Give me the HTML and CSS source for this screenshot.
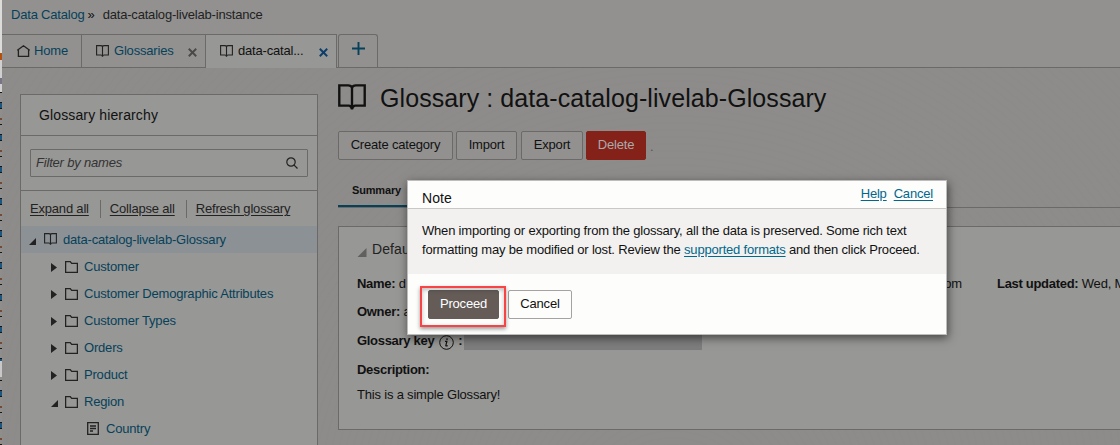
FILE: index.html
```html
<!DOCTYPE html>
<html lang="en">
<head>
<meta charset="utf-8">
<title>Data Catalog</title>
<link rel="stylesheet" href="styles.css">
</head>
<body>
<svg class="defs" aria-hidden="true">
  <symbol id="book" viewBox="0 0 26 24"><path d="M13 3.400Q12.300 1.200 9.500 1.200H1.200V20H10Q12.300 20 13 23.500Q13.700 20 16 20H24.800V1.200H16.500Q13.700 1.200 13 3.400V22" fill="none" stroke="currentColor" stroke-width="2.200"/></symbol>
  <symbol id="folder" viewBox="0 0 13 12"><path d="M.6 11.400V.6H5.200L6.700 2.400H12.400V11.400Z" fill="none" stroke="currentColor" stroke-width="1.300"/></symbol>
  <symbol id="closed" viewBox="0 0 6 9"><path d="M0 0L6 4.500L0 9Z" fill="currentColor"/></symbol>
  <symbol id="open" viewBox="0 0 7 7"><path d="M7 0V7H0Z" fill="currentColor"/></symbol>
  <symbol id="close" viewBox="0 0 8 8"><path d="M.7.7L7.300 7.300M7.300.7L.7 7.300" stroke="currentColor" stroke-width="1.700"/></symbol>
</svg>
<div class="page">
  <div class="edge"></div>
  <div class="app">
    <header class="crumbs"><a class="link">Data Catalog</a><span class="sep">»</span><span>data-catalog-livelab-instance</span></header>
    <nav class="tabs">
      <a class="tab tab-home link"><svg class="home-icon" viewBox="0 0 13 12"><path d="M.7 5L6.500.8L12.300 5L11.600 5.400V11.300H1.400V5.400Z" fill="none" stroke="currentColor" stroke-width="1.300"/></svg><span>Home</span></a>
      <a class="tab tab-gloss link"><svg class="book-icon"><use href="#book"/></svg><span>Glossaries</span><svg class="x"><use href="#close"/></svg></a>
      <a class="tab tab-active"><svg class="book-icon"><use href="#book"/></svg><span>data-catal...</span><svg class="x"><use href="#close"/></svg></a>
      <a class="tab tab-add"><svg class="plus" viewBox="0 0 13 13"><path d="M6.500 0V13M0 6.500H13" stroke="currentColor" stroke-width="1.900"/></svg></a>
    </nav>
    <div class="content">
      <aside class="side">
        <h2 class="side-title"><span>Glossary hierarchy</span></h2>
        <div class="filter"><div class="filter-input"><span>Filter by names</span><svg class="search" viewBox="0 0 12 12"><circle cx="5" cy="5" r="4.200" fill="none" stroke="currentColor" stroke-width="1.200"/><path d="M8.100 8.100L11.500 11.500" stroke="currentColor" stroke-width="1.200"/></svg></div></div>
        <div class="actions"><a class="expand">Expand all</a><a class="collapse">Collapse all</a><a class="refresh">Refresh glossary</a></div>
        <ul class="tree">
          <li class="row root"><svg class="open"><use href="#open"/></svg><svg class="book-icon"><use href="#book"/></svg><span>data-catalog-livelab-Glossary</span></li>
          <li class="row"><svg class="closed"><use href="#closed"/></svg><svg class="folder"><use href="#folder"/></svg><span>Customer</span></li>
          <li class="row"><svg class="closed"><use href="#closed"/></svg><svg class="folder"><use href="#folder"/></svg><span>Customer Demographic Attributes</span></li>
          <li class="row"><svg class="closed"><use href="#closed"/></svg><svg class="folder"><use href="#folder"/></svg><span>Customer Types</span></li>
          <li class="row"><svg class="closed"><use href="#closed"/></svg><svg class="folder"><use href="#folder"/></svg><span>Orders</span></li>
          <li class="row"><svg class="closed"><use href="#closed"/></svg><svg class="folder"><use href="#folder"/></svg><span>Product</span></li>
          <li class="row"><svg class="open"><use href="#open"/></svg><svg class="folder"><use href="#folder"/></svg><span>Region</span></li>
          <li class="row leaf"><svg class="term" viewBox="0 0 12 13"><path d="M.7.7H11.300V12.300H.7ZM3 4H9M3 6.500H9M3 9H6" fill="none" stroke="currentColor" stroke-width="1.300"/></svg><span>Country</span></li>
        </ul>
      </aside>
      <main class="main">
        <div class="heading"><svg class="big-book"><use href="#book"/></svg><h1>Glossary : data-catalog-livelab-Glossary</h1></div>
        <div class="buttons"><button class="btn b-create">Create category</button><button class="btn b-import">Import</button><button class="btn b-export">Export</button><button class="btn b-delete">Delete</button><span class="dot">.</span></div>
        <div class="subtabs"><span class="subtab">Summary</span></div>
        <section class="panel">
          <h3 class="panel-title"><svg class="panel-arrow"><use href="#open"/></svg><span>Defau</span></h3>
          <div class="fields"><p class="name"><b>Name:</b> d</p><p class="mail">com</p><p class="updated"><b>Last updated:</b> Wed, M</p></div>
          <p class="owner"><b>Owner:</b> a</p>
          <div class="key"><b>Glossary key</b><svg class="info" viewBox="0 0 15 15"><circle cx="7.500" cy="7.500" r="6.800" fill="none" stroke="currentColor"/><path d="M6 6.300H7.900L6.800 10.500Q6.700 11.300 8.700 10.600" fill="none" stroke="currentColor" stroke-width="1.200"/><circle cx="8" cy="4.100" r=".9" fill="currentColor"/></svg><b>:</b><span class="redacted"></span></div>
          <p class="desc-label"><b>Description:</b></p>
          <p class="desc">This is a simple Glossary!</p>
        </section>
      </main>
    </div>
  </div>
  <div class="dialog">
    <div class="dialog-head"><span class="note">Note</span><a class="help">Help</a><a class="head-cancel">Cancel</a></div>
    <div class="dialog-body"><p>When importing or exporting from the glossary, all the data is preserved. Some rich text</p><p>formatting may be modified or lost. Review the <a>supported formats</a> and then click Proceed.</p></div>
    <div class="dialog-foot"><button class="btn proceed">Proceed</button><button class="btn cancel">Cancel</button></div>
    <div class="highlight"></div>
  </div>
</div>
</body>
</html>
```
FILE: styles.css
```css
* { box-sizing: border-box; }
body { margin: 0; font: 13px/18px "Liberation Sans", Arial, sans-serif; letter-spacing: -.19px; color: #111; }
h1, h2, h3, p, ul { margin: 0; padding: 0; font-weight: normal; }
b { letter-spacing: -.3px; }
svg { flex: none; display: block; }
.defs { position: absolute; width: 0; height: 0; }
.page { position: relative; width: 1120px; height: 445px; overflow: hidden; display: flex; background: #8d8c8a; }
.edge { width: 2px; flex: none; background:
  linear-gradient(#c8c8c8, #c8c8c8) 0 361px / 2px 16px no-repeat,
  linear-gradient(#dcdcda 0 53px, #b4500e 53px 60px, #d0d0d0 60px 78px, #777488 78px 84px, #d0d0d0 84px 92px) 0 0 / 2px 92px no-repeat,
  repeating-linear-gradient(#8f8e8d 0 6px, #161616 6px 7px, #1c5680 7px 12px, #161616 12px 13px, #8f8e8d 13px 22px, #744c35 22px 24px, #8f8e8d 24px 28px, #161616 28px 29px, #8f8e8d 29px 32px); }
.app { flex: 1; min-width: 0; }
.link { color: #06415a; }
.crumbs { height: 34px; padding: 6px 0 0 9px; background: #929190; color: #222; white-space: nowrap; display: flex; }
.sep { margin: 0 8px 0 3px; color: #111; }
.tabs { height: 34px; display: flex; background: #929190; border-bottom: 1px solid #6c6a68; }
.tab { height: 33px; display: flex; align-items: center; border-top: 1px solid #6c6a68; border-right: 1px solid #6c6a68; white-space: nowrap; }
.tab svg { color: #222; }
.tab-home { width: 80px; padding-left: 15px; gap: 4px; }
.home-icon { width: 13px; height: 12px; }
.book-icon { width: 13px; height: 12px; color: #222; }
.tab-gloss { width: 124px; padding-left: 14px; gap: 5px; }
.tab .x { width: 9px; height: 9px; margin: 2px 8px 0 auto; color: #4b4947; }
.tab-active { width: 131px; height: 34px; padding-left: 14px; gap: 5px; background: #979795; padding-bottom: 1px; }
.tab-active .x { color: #0d3e6b; }
.tab-add { width: 40px; margin-left: 1px; border: 1px solid #6c6a68; border-bottom: 0; border-radius: 3px 3px 0 0; justify-content: center; padding-bottom: 6px; }
.tab-add .plus { width: 13px; height: 13px; color: #06415a; }
.content { display: flex; align-items: flex-start; height: 377px; overflow: hidden; background: repeating-radial-gradient(circle at 60% 120%, #8d8c8a 0 4px, #8c8b89 5px 6px, #8d8c8a 7px); }
.side { width: 298px; flex: none; height: 400px; margin: 26px 0 0 18px; border: 1px solid #6c6a68; background: #979795; }
.side-title { height: 41px; padding: 11px 0 0 18px; font-size: 14px; letter-spacing: .13px; line-height: 18px; border-bottom: 1px solid #6c6a68; }
.filter { height: 55px; padding: 13px 9px; border-bottom: 1px solid #6c6a68; }
.filter-input { height: 28px; border: 1px solid #6c6a68; border-radius: 1px; display: flex; align-items: center; justify-content: space-between; padding: 0 9px 0 5px; font-style: italic; color: #333; }
.search { width: 12px; height: 12px; color: #222; }
.actions { height: 35px; padding: 9px 0 0 9px; display: flex; color: #222; }
.actions a { text-decoration: underline; text-underline-offset: 2px; white-space: nowrap; }
.actions .expand, .actions .collapse { height: 18px; border-right: 1px solid #6c6a68; padding-right: 11px; margin-right: 9px; }
.tree { list-style: none; color: #06415a; }
.row { display: flex; align-items: center; height: 27px; padding-left: 30px; white-space: nowrap; }
.row svg { color: #222; }
.root { padding-left: 8px; background: #8c9195; }
.row .open { width: 7px; height: 7px; margin-top: 3px; }
.row .closed { width: 6px; height: 9px; margin-top: 2px; }
.row .folder { width: 13px; height: 12px; margin: 0 6px 0 8px; }
.row .open + .folder { margin-left: 7px; }
.root .book-icon { margin: 0 6px 2px 8px; }
.leaf { padding-left: 66px; }
.term { width: 12px; height: 13px; margin-right: 7px; }
.main { flex: none; width: 800px; margin-left: 20px; }
.heading { display: flex; align-items: center; height: 59px; gap: 14px; }
.big-book { width: 28px; height: 26px; color: #111; margin-top: -1px; }
h1 { font-size: 25px; line-height: 30px; letter-spacing: .08px; white-space: nowrap; }
.buttons { display: flex; height: 33px; padding-top: 4px; }
.btn { font: 13px/17px "Liberation Sans", Arial, sans-serif; letter-spacing: -.19px; height: 29px; padding: 0 0 2px; border: 1px solid #6c6a68; border-radius: 2px; background: #929190; color: #111; text-align: center; white-space: nowrap; }
.b-create { width: 115px; }
.b-import { width: 61px; margin-left: 3px; }
.b-export { width: 62px; margin-left: 4px; }
.b-delete { width: 60px; margin-left: 3px; border-color: #84221a; background: #84221a; color: #aaa; }
.dot { margin-left: 4px; color: #555; line-height: 31px; }
.subtabs { height: 48px; display: flex; border-bottom: 1px solid #6c6a68; }
.subtab { width: 77px; height: 47px; padding-top: 21px; text-align: center; font: bold 11px/18px "Liberation Sans", Arial, sans-serif; border-bottom: 2px solid #06415a; }
.panel { height: 204px; margin-top: 18px; padding-left: 18px; border: 1px solid #6c6a68; background: #979795; }
.panel-title { display: flex; align-items: center; height: 44px; font-size: 14px; letter-spacing: .1px; gap: 5px; color: #222; }
.panel-arrow { width: 10px; height: 9px; margin-top: 7px; color: #62605e; }
.fields { display: flex; padding-top: 4px; white-space: nowrap; }
.name { width: 581px; flex: none; }
.mail { width: 59px; flex: none; }
.owner { padding-top: 10px; }
.key { display: flex; align-items: center; height: 20px; margin-top: 10px; }
.info { width: 15px; height: 15px; margin: 3px 4px 0 5px; }
.redacted { width: 238px; height: 15px; margin: 0 0 -2px 2px; background: #7d7d7d; }
.desc-label { margin-top: 10px; }
.desc { margin-top: 7px; }
.dialog { position: absolute; left: 407px; top: 180px; width: 540px; height: 155px; border: 1px solid #bdbdbd; background: #fdfdfc; box-shadow: 1px 3px 9px rgba(0,0,0,.55); }
.dialog a { color: #00688c; text-decoration: underline; text-underline-offset: 2px; }
.dialog-head { height: 28px; border-bottom: 1px solid #c9c8c7; display: flex; padding: 4px 13px 0 14px; }
.note { margin: 4px auto 0 0; font-size: 14px; letter-spacing: .1px; }
.head-cancel { margin-left: 7px; }
.dialog-body { height: 65px; padding: 12px 0 0 14px; background: #f2f1f0; line-height: 19px; white-space: nowrap; }
.dialog-foot { display: flex; gap: 9px; padding: 16px 0 0 20px; }
.dialog-foot .btn { background: #fdfdfc; border-color: #a5a3a1; }
.dialog-foot .proceed { width: 71px; background: #655c58; border-color: #655c58; color: #fff; }
.dialog-foot .cancel { width: 64px; }
.highlight { position: absolute; left: 12px; top: 105px; width: 86px; height: 41px; border: 2px solid #f84444; box-shadow: 0 2px 4px rgba(0,0,0,.4), inset 0 2px 4px rgba(0,0,0,.25); }
```
